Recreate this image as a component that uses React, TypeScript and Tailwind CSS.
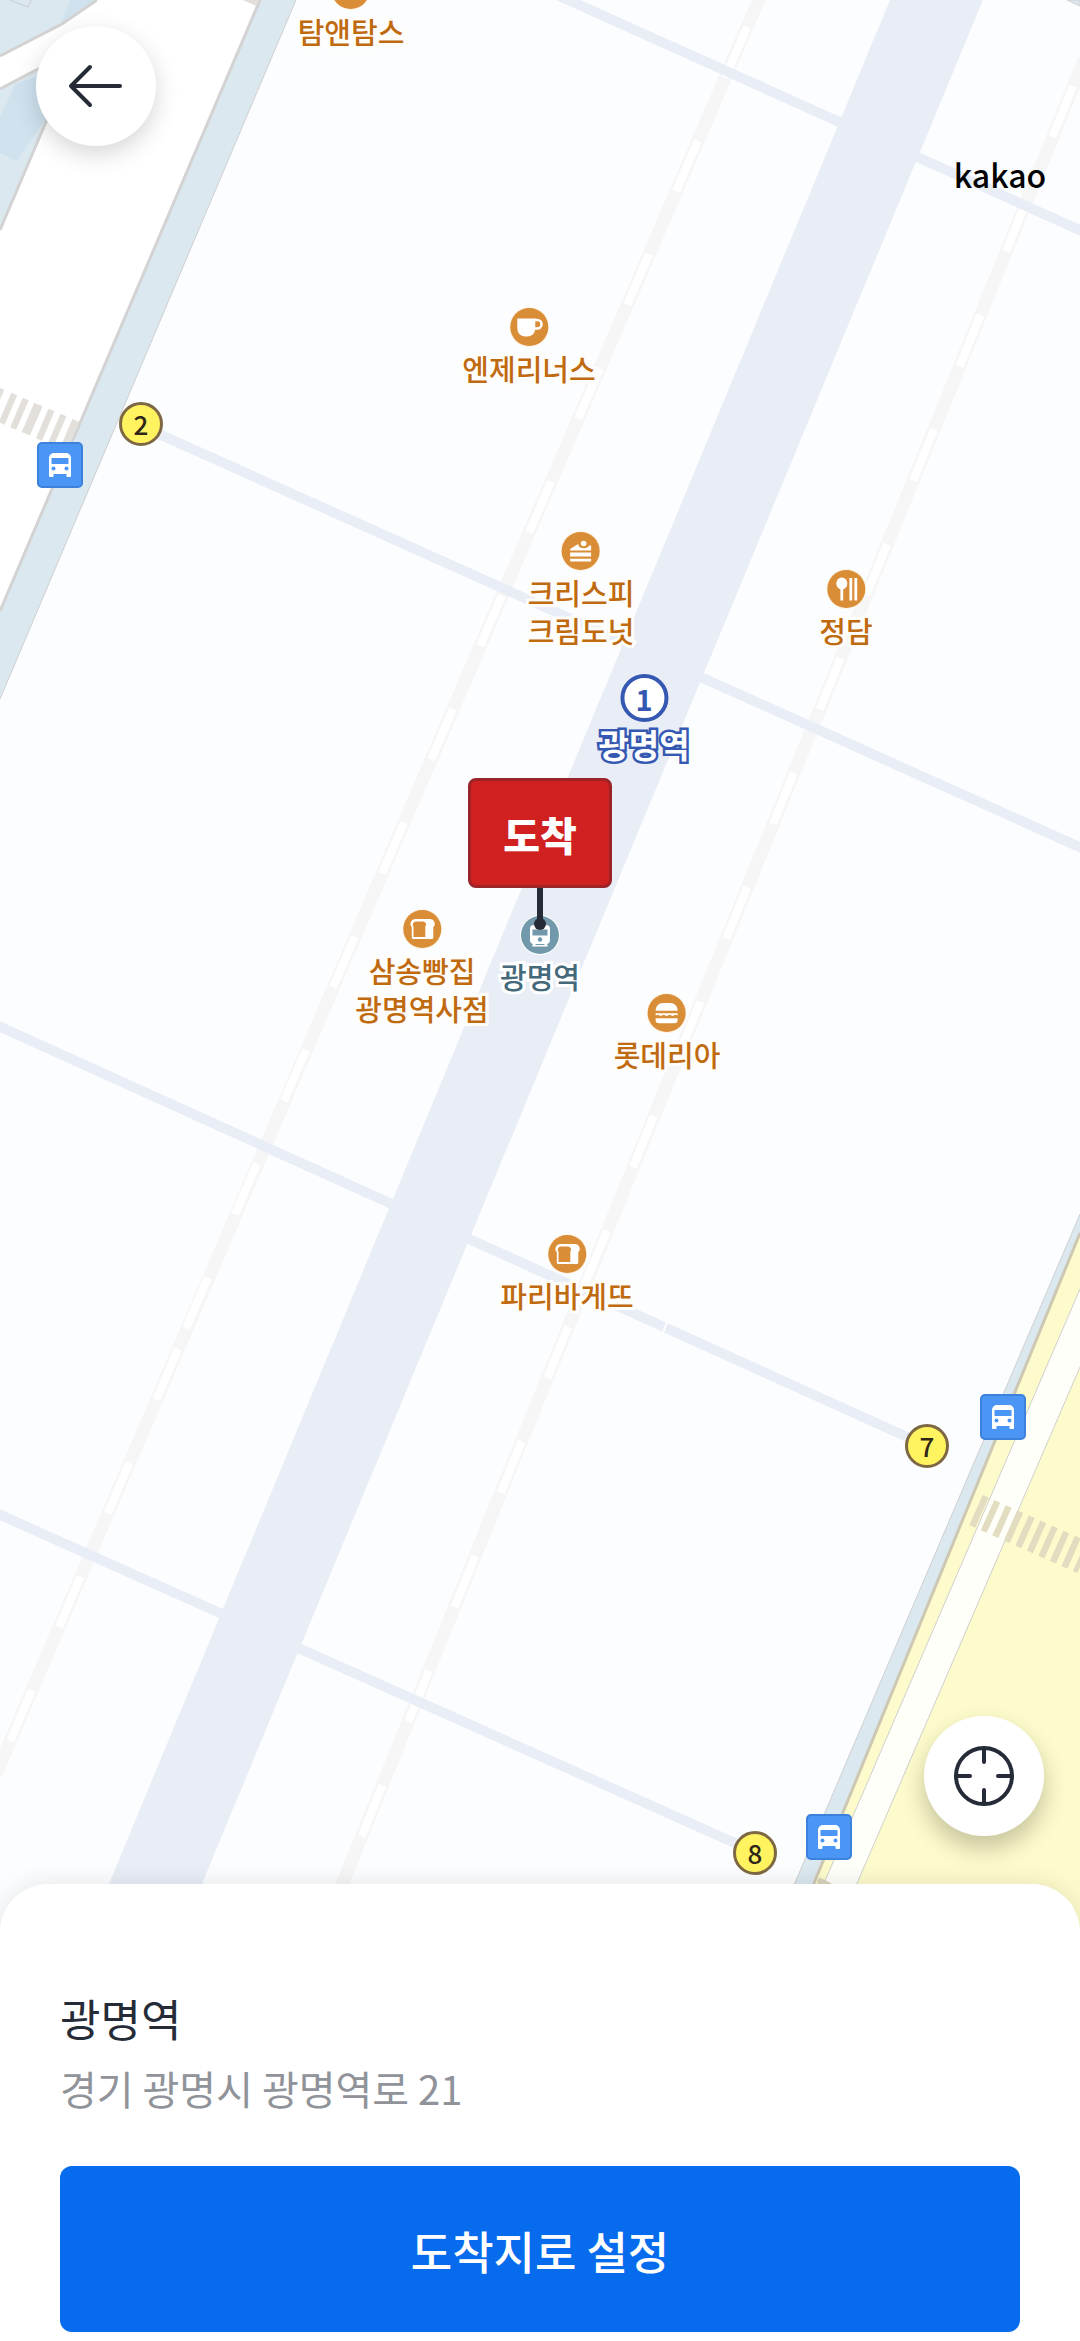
import type { ReactNode } from "react";

const MAP_W = 1080;
const MAP_H = 1932;

type Place = {
  x: number;
  y: number;
  lines: string[];
  icon: "cup" | "cake" | "food" | "bread" | "burger";
};

const places: Place[] = [
  { x: 351, y: -10, lines: ["탐앤탐스"], icon: "cup" },
  { x: 529, y: 327, lines: ["엔제리너스"], icon: "cup" },
  { x: 581, y: 551, lines: ["크리스피", "크림도넛"], icon: "cake" },
  { x: 846, y: 589, lines: ["정담"], icon: "food" },
  { x: 422, y: 929, lines: ["삼송빵집", "광명역사점"], icon: "bread" },
  { x: 667, y: 1013, lines: ["롯데리아"], icon: "burger" },
  { x: 567, y: 1254, lines: ["파리바게뜨"], icon: "bread" },
];

const exits = [
  { x: 141, y: 424, label: "2" },
  { x: 927, y: 1446, label: "7" },
  { x: 755, y: 1853, label: "8" },
];

const busStops = [
  { x: 60, y: 465 },
  { x: 1003, y: 1417 },
  { x: 829, y: 1837 },
];

// Puts its children on the map; x is the centre, y the top edge
const Pin = ({ x, y, children }: { x: number; y: number; children: ReactNode }) => (
  <div
    className="absolute flex -translate-x-1/2 flex-col items-center"
    style={{ left: `${(x / MAP_W) * 100}%`, top: `${(y / MAP_H) * 100}%` }}
  >
    {children}
  </div>
);

const PlaceIcon = ({ icon }: { icon: Place["icon"] }) => (
  <svg viewBox="0 0 40 40" className="mb-[2px] size-10">
    <circle cx="20" cy="20" r="20" fill="#fdf3e6" />
    <circle cx="20" cy="20" r="19" fill="#d98d36" />
    {icon === "cup" && (
      <>
        <path d="M8 11.500h18v10a8 8 0 0 1-8 8h-2a8 8 0 0 1-8-8z" fill="#fff" />
        <path d="M25 13h3a4 4 0 0 1 0 8.500h-3" fill="none" stroke="#fff" strokeWidth="2.500" />
      </>
    )}
    {icon === "cake" && (
      <>
        <path d="M9.500 19.500v-1.500l8-5c.5 3 2.500 4.200 5.500 4.200s4.500-1 5.500-2.700h2v5z" fill="#fff" />
        <circle cx="23" cy="12.500" r="2.800" fill="#fff" />
        <path d="M9.500 21.500h21v4h-21zM9.500 27.800h21v2.700h-21z" fill="#fff" />
      </>
    )}
    {icon === "food" && (
      <>
        <ellipse cx="15.500" cy="14.500" rx="5.500" ry="6" fill="#fff" />
        <path d="M15.500 18v13.500M24.500 9v22.500M29.500 9v22.500" stroke="#fff" strokeWidth="2.800" />
      </>
    )}
    {icon === "bread" && (
      <>
        <path d="M12.500 10h15a4.800 4.800 0 0 1 3.500 8.200v10.300a1.500 1.500 0 0 1-1.500 1.500h-18.500a1.500 1.500 0 0 1-1.500-1.500v-10.300a4.800 4.800 0 0 1 3-8.200z" fill="#fff" />
        <path d="M13.500 12.500h7a3.200 3.200 0 0 1 2.500 5.300v10.200H11.200v-10.200a3.200 3.200 0 0 1 2.300-5.300z" fill="#d98d36" />
      </>
    )}
    {icon === "burger" && (
      <>
        <path d="M9 17.800c0-4.500 3-7.800 7.500-7.800h7c4.500 0 7.500 3.300 7.500 7.800z" fill="#fff" />
        <path d="M9 20.300h22v2.200l-2.200-.8-2.800 1.300-3-1.300-3 1.300-3-1.300-3 1.300-2.800-1.300-2.200.8z" fill="#fff" />
        <path d="M9 25.300h22v1.700a3.200 3.200 0 0 1-3.200 3.200H12.200A3.200 3.200 0 0 1 9 27z" fill="#fff" />
      </>
    )}
  </svg>
);

const BusIcon = () => (
  <svg viewBox="0 0 46 46" className="size-[46px]">
    <rect x="1" y="1" width="44" height="44" rx="4" fill="#4b96f5" stroke="#3c82dc" strokeWidth="2" />
    <path d="M17 11h12a5 5 0 0 1 5 5v18a1 1 0 0 1-1 1h-2.500a1 1 0 0 1-1-1v-2h-13v2a1 1 0 0 1-1 1H13a1 1 0 0 1-1-1V16a5 5 0 0 1 5-5z" fill="#fff" />
    <path d="M14.500 16h17v6h-17z" fill="#4b96f5" />
    <circle cx="16.500" cy="26.500" r="2" fill="#4b96f5" />
    <circle cx="29.500" cy="26.500" r="2" fill="#4b96f5" />
  </svg>
);

const MapTiles = () => (
  <svg
    viewBox="0 0 1080 1932"
    preserveAspectRatio="xMidYMid slice"
    className="absolute inset-0 h-full w-full"
    aria-hidden="true"
  >
    <rect width="1080" height="1932" fill="#fcfdff" />

    {/* North-west road */}
    <path d="M0 0H296L0 699z" fill="#dbe8ef" />
    <path d="M296 0L0 699" stroke="#cfcfcf" strokeWidth="1" />
    <path d="M70 0H97L62 22z" fill="#cfe2ee" />
    <path d="M15 84L0 118V153L17 161L50 112V72z" fill="#cfe2ee" />
    <path d="M10 0L28 7L31 0" fill="none" stroke="#c8cccf" strokeWidth="1" />
    <path d="M0 56L62 24L97 0H260L0 611V230L66 76L38 69L0 89z" fill="#fff" />
    <path d="M0 56L62 24L97 0M0 89L38 69L60 60M0 230L60 89M260 0L0 611" fill="none" stroke="#d3d3d3" strokeWidth="3" />
    <path
      d="M-8 402L74 437"
      stroke="#e3e0db"
      strokeWidth="32"
      strokeDasharray="6.500 7.600 6.500 6 6.500 6 9 6.500 6.500 6.500 6.500 6.500 7 20"
    />
    <path d="M241 -4L257 3" stroke="#e3e0db" strokeWidth="6" />

    {/* Railway tracks */}
    <g fill="none" stroke="#f6f6f6" strokeWidth="13">
      <path d="M763 -10L388 860L135 1450L-4 1774" />
      <path d="M1084 60L946 400L518 1450L323 1932" />
    </g>
    <g fill="none" stroke="#fff" strokeWidth="8" strokeDasharray="55 68.800">
      <path d="M747 27L181 1340" />
      <path d="M178 1349L-4 1774" />
    </g>
    <g fill="none" stroke="#fff" strokeWidth="8" strokeDasharray="55 68.600">
      <path d="M1073 86L946 400L602 1243" />
      <path d="M606 1233L585 1284M568 1327L323 1932" />
    </g>

    {/* Platform and walkways */}
    <path d="M890 0H983L182 1932H89z" fill="#e9edf6" />
    <g fill="none" stroke="#e9edf6" strokeWidth="10">
      <path d="M546 -10L1084 232" />
      <path d="M141 426L1084 849" />
      <path d="M-4 1025L927 1446" />
      <path d="M-4 1513L755 1852" />
    </g>
    <path d="M667 1322L663 1333" stroke="#fff" strokeWidth="2" />

    {/* South-east road */}
    <path d="M1080 1214L774 1932H1080z" fill="#dbe8ef" />
    <path d="M1080 1233L794 1932H1080z" fill="#fdfacb" />
    <path d="M1080 1233L794 1932" stroke="#cdc8b4" strokeWidth="3" />
    <path d="M1080 1289L803 1932H836L1080 1367z" fill="#fefff8" />
    <path d="M1080 1214L774 1932M1080 1289L803 1932M1080 1367L836 1932" stroke="#cfcfcf" strokeWidth="1" />
    <path d="M976 1510L1084 1558" stroke="#e2dcc0" strokeWidth="33" strokeDasharray="6.500 6.100" />
    <path d="M818 1880L830 1886" stroke="#d8d3bd" strokeWidth="6" />
    <path d="M1067 0L1080 6V0z" fill="#dbe8ef" stroke="#cfcfcf" strokeWidth="1" />
  </svg>
);

const App = () => {
  return (
    <div className="flex min-h-screen flex-col bg-white font-['Noto_Sans_CJK_KR',sans-serif]">
      <main className="relative flex-1 overflow-hidden">
        <MapTiles />

        {places.map((place) => (
          <Pin key={place.lines[0]} x={place.x} y={place.y - 20}>
            <PlaceIcon icon={place.icon} />
            {place.lines.map((line) => (
              <span
                key={line}
                className="text-[29px] leading-[38px] font-medium whitespace-nowrap text-[#c06a10] [-webkit-text-stroke:6px_#fffdfa] [paint-order:stroke_fill]"
              >
                {line}
              </span>
            ))}
          </Pin>
        ))}

        {exits.map((exit) => (
          <Pin key={exit.label} x={exit.x} y={exit.y - 22}>
            <span className="flex size-11 items-center justify-center rounded-full border-[3px] border-[#7d6843] bg-[#fff35f] text-[26px] leading-none font-medium text-[#2e2717]">
              {exit.label}
            </span>
          </Pin>
        ))}

        {busStops.map((stop) => (
          <Pin key={stop.y} x={stop.x} y={stop.y - 23}>
            <BusIcon />
          </Pin>
        ))}

        {/* Subway station */}
        <Pin x={644} y={674}>
          <span className="flex size-12 items-center justify-center rounded-full border-4 border-[#3558b2] bg-white text-[29px] leading-none font-bold text-[#3558b2]">
            1
          </span>
          <span className="text-[33px] leading-11 font-bold whitespace-nowrap text-white [-webkit-text-stroke:5px_#3558b2] [paint-order:stroke_fill]">
            광명역
          </span>
        </Pin>

        {/* Train station */}
        <Pin x={540} y={915}>
          <svg viewBox="0 0 40 40" className="mb-[2px] size-10">
            <circle cx="20" cy="20" r="20" fill="#fff" />
            <circle cx="20" cy="20" r="19" fill="#7299ab" />
            <path d="M14 10h12a4 4 0 0 1 4 4v11a4 4 0 0 1-3 4l1 2.500H12l1-2.500a4 4 0 0 1-3-4V14a4 4 0 0 1 4-4z" fill="#fff" />
            <path d="M12.500 14.500h15v6h-15z" fill="#7299ab" />
            <circle cx="20" cy="24.500" r="2.200" fill="#7299ab" />
            <path d="M15.500 29.500h9" stroke="#7299ab" strokeWidth="1" />
          </svg>
          <span className="text-[29px] leading-[38px] font-medium whitespace-nowrap text-[#44697a] [-webkit-text-stroke:6px_#fff] [paint-order:stroke_fill]">
            광명역
          </span>
        </Pin>

        {/* Arrival flag */}
        <Pin x={540} y={778}>
          <span className="flex h-[110px] w-36 items-center justify-center rounded-lg border-[3px] border-[#9c2429] bg-[#d02020] pt-[2px] text-[40px] leading-none font-black text-white">
            도착
          </span>
          <span className="h-8 w-[6px] bg-[#252c38]" />
          <span className="-mt-[2px] size-3 rounded-full bg-[#252c38]" />
        </Pin>

        <Pin x={1000} y={150}>
          <span className="text-[32px] leading-12 font-medium text-black">kakao</span>
        </Pin>

        <button
          type="button"
          aria-label="뒤로 가기"
          className="absolute top-[26px] left-9 flex size-30 items-center justify-center rounded-full bg-white shadow-[0_8px_24px_rgba(0,0,0,0.16)]"
        >
          <svg viewBox="0 0 60 60" className="size-15" fill="none" stroke="#252c38" strokeWidth="4" strokeLinecap="round" strokeLinejoin="round">
            <path d="M54 30H6M24 11L5 30L24 49" />
          </svg>
        </button>

        <button
          type="button"
          aria-label="현재 위치"
          className="absolute right-9 bottom-24 flex size-30 items-center justify-center rounded-full bg-white shadow-[0_12px_24px_rgba(0,0,0,0.22)]"
        >
          <svg viewBox="0 0 60 60" className="size-15" fill="none" stroke="#252c38" strokeWidth="4" strokeLinecap="round">
            <circle cx="30" cy="30" r="28" />
            <path d="M30 2v14M30 44v14M2 30h14M44 30h14" />
          </svg>
        </button>
      </main>

      {/* Bottom sheet */}
      <section className="relative -mt-12 rounded-t-[48px] bg-white px-15 pt-[102px] pb-[9px] shadow-[0_0_24px_rgba(0,0,0,0.1)]">
        <h1 className="text-[44px] leading-16 font-normal text-[#252c38]">광명역</h1>
        <p className="mt-2 text-[40px] leading-15 text-[#909399]">경기 광명시 광명역로 21</p>
        <button
          type="button"
          className="mt-12 h-[166px] w-full rounded-xl bg-[#066bed] pt-[4px] text-[45px] font-medium text-white"
        >
          도착지로 설정
        </button>
      </section>
    </div>
  );
};

export default App;
